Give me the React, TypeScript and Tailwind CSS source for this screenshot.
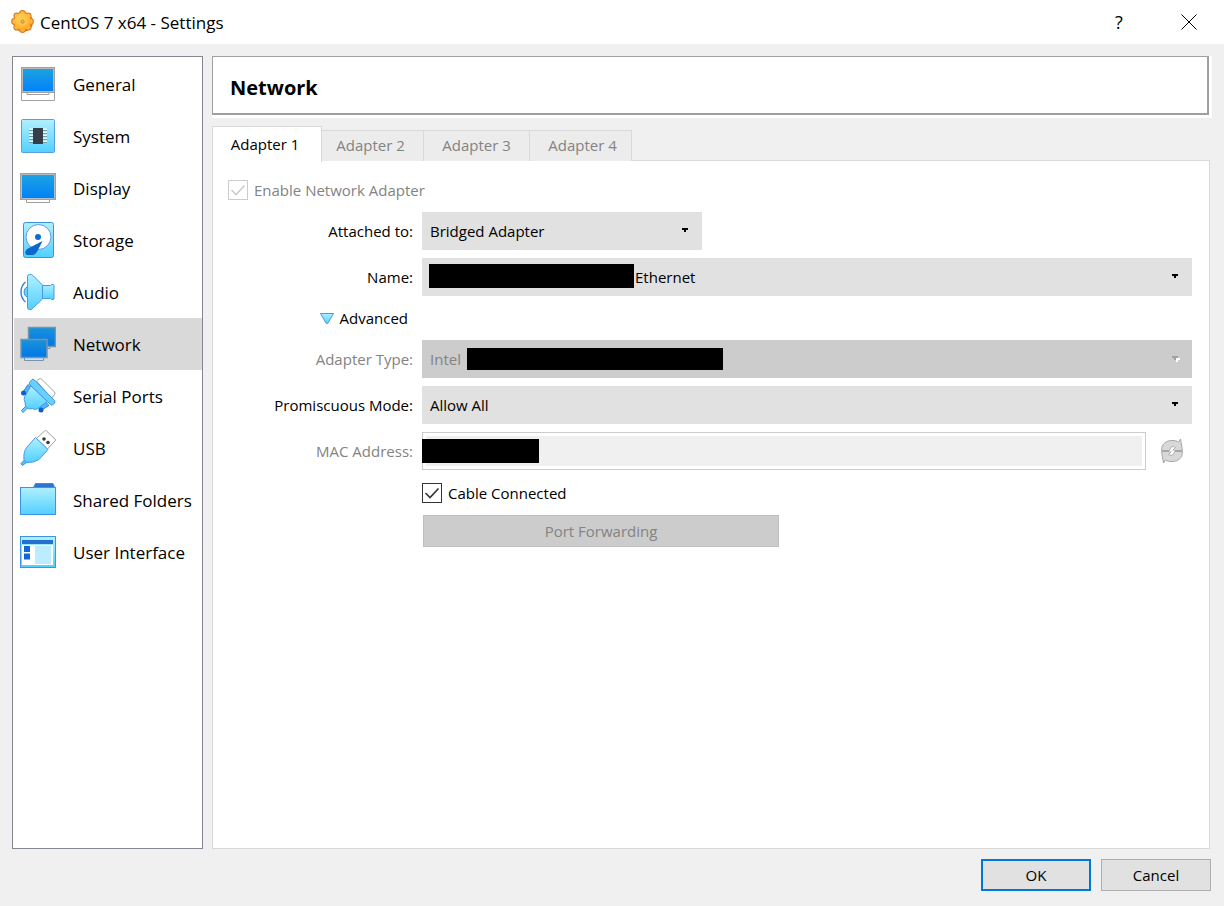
import { useState, type ReactNode, type SelectHTMLAttributes } from "react";
import { clsx } from "clsx";

function Gradients() {
    return (
        <svg className="absolute w-0 h-0" aria-hidden="true">
            <defs>
                <linearGradient id="screen" x1="0" y1="0" x2="0" y2="1">
                    <stop offset="0" stopColor="#1fa5e0" />
                    <stop offset="1" stopColor="#0080fb" />
                </linearGradient>
                <linearGradient id="sky" x1="0" y1="0" x2="0" y2="1">
                    <stop offset="0" stopColor="#b0f0ff" />
                    <stop offset="1" stopColor="#52d0ff" />
                </linearGradient>
                <linearGradient id="netScreen" x1="0" y1="0" x2="0" y2="1">
                    <stop offset="0" stopColor="#1a93dd" />
                    <stop offset="1" stopColor="#0077e6" />
                </linearGradient>
                <radialGradient id="gear" cx="0.4" cy="0.35" r="0.7">
                    <stop offset="0" stopColor="#ffdc58" />
                    <stop offset="1" stopColor="#ffa428" />
                </radialGradient>
            </defs>
        </svg>
    );
}

const icons: Record<string, ReactNode> = {
    General: (
        <>
            <path d="M1.5 26.5h33v8h-33z" fill="#fff" stroke="#a0a0a0" />
            <path d="M7 26.5v2h22v-2" fill="#fff" stroke="#a0a0a0" />
            <rect x="1.5" y="1.5" width="33" height="25" fill="url(#screen)" stroke="#a0a0a0" />
            <rect x="2.5" y="2.5" width="31" height="23" fill="none" stroke="#b8b8b8" />
        </>
    ),
    System: (
        <>
            <rect x="1.5" y="1.5" width="33" height="33" rx="1" fill="url(#sky)" stroke="#5a9fe0" />
            <path d="M9 11.5h18M9 14.5h18M9 17.5h18M9 20.5h18M9 23.5h18" stroke="#e8fbff" strokeWidth="2" />
            <path d="M9 12.5h18M9 15.5h18M9 18.5h18M9 21.5h18M9 24.5h18" stroke="#6a9cb0" />
            <rect x="13" y="10" width="10" height="16" fill="#353d48" />
        </>
    ),
    Display: (
        <>
            <path d="M6.5 29v3.5h23V29" fill="#fff" stroke="#a0a0a0" />
            <rect x="0.5" y="3.5" width="35" height="26" fill="url(#screen)" stroke="#a0a0a0" />
            <path d="M1.5 28.5v-24h33v24z" fill="none" stroke="#b4bcc4" />
        </>
    ),
    Storage: (
        <>
            <rect x="3.5" y="0.5" width="30" height="35" rx="2" fill="url(#sky)" stroke="#3c90e0" />
            <circle cx="18.5" cy="15" r="12.5" fill="#fff" stroke="#5a9ce0" />
            <circle cx="18" cy="15" r="3" fill="#0c6cd0" />
            <path d="M22.5 19 8 26.5c-3 1.5-4 6-0.5 6.5H13q3-1 4.5-4z" fill="#0c68d0" />
        </>
    ),
    Audio: (
        <>
            <path d="M5.5 8c-6 5-6 15 0 20" fill="none" stroke="#3484dc" strokeWidth="1.5" />
            <path d="M7.5 13c-4.500 1-4.500 9 0 10" fill="#68d4ff" stroke="#3484dc" />
            <path d="M7.5 2.5q0-2 2-2h2l2 1.5 9 9v14l-9 8.5-2 2h-2q-2 0-2-2z" fill="url(#sky)" stroke="#4898e4" />
            <path d="M22.5 11.5h8l1.500-1h1q1 0 1 1v13q0 1-1 1h-1l-1.500-1h-8z" fill="url(#sky)" stroke="#4898e4" />
        </>
    ),
    Network: (
        <>
            <path d="M14 20v2.5h16V20" fill="#d4e8fb" stroke="#7894ac" />
            <rect x="8.5" y="1.5" width="27" height="19" fill="url(#netScreen)" stroke="#7894ac" strokeWidth="1.5" />
            <path d="M4.5 31v3.5h19V31" fill="#c4e0fa" stroke="#7894ac" />
            <rect x="1" y="13.500" width="26" height="18" fill="url(#netScreen)" stroke="#7894ac" strokeWidth="1.5" />
        </>
    ),
    "Serial Ports": (
        <>
            <path d="m16.5 3 2.500-2q1.500-1 2.500 0L34.500 14q1 1 0 2.500l-3 4z" fill="#fff" stroke="#a0a0a0" />
            <path d="M3 14 8 6.5l3 3-5 7zM21 32.5l8-5-3.500-4-7 6z" fill="#54b4f8" stroke="#3488dc" />
            <path d="m6 28-4.500 4.500 1.500 2 5-5" fill="#68d4ff" stroke="#3488dc" />
            <path d="M11 7.5 4.500 19q-1 3 .5 5l.5 4 3 3 4-.5q2.500 2 5.500 0L28 23z" fill="url(#sky)" stroke="#4898e4" />
            <circle cx="3.500" cy="15" r="2.500" fill="#0c60cc" />
            <circle cx="21" cy="32" r="2.500" fill="#0c60cc" />
            <path d="m9.500 4.500 2.500-3q1-1 2.500.5l20 20.500q1 1 0 2.500l-2 2q-1 .5-2-.5L10 7q-1-1-.5-2.500z" fill="#68d0fc" stroke="#3c90e0" />
        </>
    ),
    USB: (
        <>
            <path d="M16.5 8.5 24.500 1q1-1 2 0l8.500 8q1 1 0 2l-7.500 8z" fill="#fff" stroke="#a0a0a0" />
            <circle cx="24" cy="9" r="1.800" fill="#383838" />
            <circle cx="28" cy="12.500" r="1.800" fill="#383838" />
            <path d="m5 29.500-4 4 1.500 2 5-4" fill="#54c0fc" stroke="#3488dc" />
            <path d="M15.500 7.5 7 17q-4 5-3 13l2 2.500q8 .5 13-3L28 19.500z" fill="url(#sky)" stroke="#4898e4" />
        </>
    ),
    "Shared Folders": (
        <>
            <path d="M13 6.500 15.500 1.500h17.500l2 5z" fill="#2c74d4" stroke="#4488dc" />
            <rect x="0.5" y="5.5" width="35" height="27" fill="url(#sky)" stroke="#3c94e4" />
        </>
    ),
    "User Interface": (
        <>
            <rect x="0.5" y="2.5" width="35" height="31" fill="url(#sky)" stroke="#3c94e4" />
            <path d="M2 6h31v4H2z" fill="#2470d0" />
            <path d="M2 11h31v20H2z" fill="#fff" />
            <path d="M4 12h6v6H4zM4 19.500h6v6H4z" fill="#1068d8" />
            <path d="M15 12h16v18H15z" fill="#bcecff" />
        </>
    ),
};

const sections = Object.keys(icons);
const adapters = ["Adapter 1", "Adapter 2", "Adapter 3", "Adapter 4"];

// centres of the eight gear teeth
const teeth = [
    [12.5, 3.5],
    [18.2, 5.8],
    [20.5, 11.5],
    [18.2, 17.2],
    [12.5, 19.5],
    [6.8, 17.2],
    [4.5, 11.5],
    [6.8, 5.8],
];

function GearIcon() {
    return (
        <svg viewBox="0 0 25 24" className="w-[25px] h-6" aria-hidden="true">
            <g fill="#d87820">
                <circle cx="13" cy="12" r="10" />
                {teeth.map(([x, y]) => (
                    <circle key={`${x}-${y}`} cx={x} cy={y} r="3.4" />
                ))}
            </g>
            <g fill="#ffb43c">
                {teeth.map(([x, y]) => (
                    <circle key={`${x}-${y}`} cx={x} cy={y} r="2.4" />
                ))}
            </g>
            <circle cx="12.5" cy="11.5" r="8.5" fill="url(#gear)" />
            <circle cx="12.5" cy="11.5" r="4" fill="none" stroke="#ffc450" strokeWidth="1.5" />
            <circle cx="12.5" cy="11.5" r="1.6" fill="#f0c080" stroke="#d87820" />
        </svg>
    );
}

function RefreshIcon() {
    return (
        <svg viewBox="0 0 24 26" className="w-6 h-[26px]" fill="#d8d8d8" stroke="#a8a8a8" aria-hidden="true">
            <path d="M1.5 12.5C1.500 6 6 2.500 12 2.500c3 0 5 .5 6.500 1.500L20.500 1l2 11.500H12.500l3-3c-3-2-5.500 0-6 3z" />
            <path d="M22.500 13.500C22.500 20 18 23.500 12 23.500c-3 0-5-.5-6.500-1.500L3.500 25l-2-11.500h10l-3 3c3 2 5.500 0 6-3z" />
            <path d="m13 9-4 4.500h3L11 17l4-4.500h-3z" fill="#fff" stroke="none" />
        </svg>
    );
}

interface DropDownProps extends SelectHTMLAttributes<HTMLSelectElement> {
    value: string;
    options: string[];
    children?: ReactNode;
}

function DropDown({ value, options, className, disabled, children, ...rest }: DropDownProps) {
    return (
        <div className="relative w-full">
            <select
                {...rest}
                defaultValue={value}
                disabled={disabled}
                className={clsx(
                    "block w-full h-[38px] appearance-none pr-8 opacity-100 outline-none",
                    disabled ? "bg-[#cccccc] text-[#838383]" : "bg-[#e1e1e1] text-black",
                    className ?? "pl-2"
                )}
            >
                {options.map((option) => (
                    <option key={option}>{option}</option>
                ))}
            </select>
            {children}
            <svg
                viewBox="0 0 8 6"
                className="absolute right-3 top-4 w-2 h-1.5 pointer-events-none"
                shapeRendering="crispEdges"
                aria-hidden="true"
            >
                {disabled && <path d="M4 2h4v2H6v2H4z" fill="#fff" />}
                <path d="M0 0h6v2H4v2H2V2H0z" fill={disabled ? "#a0a0a0" : "#000"} />
            </svg>
        </div>
    );
}

interface CheckProps {
    label: string;
    disabled?: boolean;
}

function Check({ label, disabled }: CheckProps) {
    return (
        <label className={clsx("inline-flex items-center gap-1.5", disabled && "text-[#838383]")}>
            <span className="grid w-5 h-5">
                <input
                    type="checkbox"
                    defaultChecked
                    disabled={disabled}
                    className={clsx(
                        "peer col-start-1 row-start-1 w-5 h-5 appearance-none border bg-white",
                        disabled ? "border-[#cccccc]" : "border-[#333333]"
                    )}
                />
                <svg
                    viewBox="0 0 20 20"
                    className="col-start-1 row-start-1 hidden peer-checked:block pointer-events-none"
                    fill="none"
                    stroke={disabled ? "#cccccc" : "#333333"}
                    strokeWidth="1.6"
                    aria-hidden="true"
                >
                    <path d="m3.5 10 4.5 4.5 8.500-9" />
                </svg>
            </span>
            {label}
        </label>
    );
}

const labelClass = "text-right whitespace-nowrap";

export default function App() {
    const [section, setSection] = useState("Network");
    const [adapter, setAdapter] = useState("Adapter 1");

    return (
        <div className="min-h-screen flex flex-col bg-[#f0f0f0] text-black text-[15px] leading-5 font-['Open_Sans','Noto_Sans',sans-serif]">
            <Gradients />

            <header className="h-11 bg-white flex items-center pl-[10px]">
                <GearIcon />
                <h1 className="ml-[5px] flex-1 pt-px text-[17px]">CentOS 7 x64 - Settings</h1>
                <button aria-label="Help" className="w-[70px] h-11 text-lg">?</button>
                <button aria-label="Close" className="w-[70px] h-11 flex items-center justify-center">
                    <svg viewBox="0 0 16 16" className="w-4 h-4" stroke="#000" aria-hidden="true">
                        <path d="m0.5 0.5 15 15M15.5 0.5l-15 15" />
                    </svg>
                </button>
            </header>

            <div className="flex-1 flex gap-[9px] pl-3 pr-3.5 pt-3">
                <nav className="w-[191px] shrink-0 bg-white border border-[#828790] py-px pl-px">
                    {sections.map((name) => (
                        <button
                            key={name}
                            onClick={() => setSection(name)}
                            aria-current={section === name ? "page" : undefined}
                            className={clsx(
                                "w-full h-[52px] flex items-center gap-[17px] pl-1.5 text-[17px] whitespace-nowrap",
                                section === name && "bg-[#d9d9d9]"
                            )}
                        >
                            <svg viewBox="0 0 36 36" className="w-9 h-9 shrink-0" aria-hidden="true">
                                {icons[name]}
                            </svg>
                            <span className="pt-0.5">{name}</span>
                        </button>
                    ))}
                </nav>

                <main className="flex-1 min-w-0 flex flex-col">
                    <div className="bg-white pr-[3px] pb-[3px] -mr-0.5">
                        <div className="h-[59px] flex items-center pl-[17px] pt-1.5 border border-r-2 border-b-2 border-[#a0a0a0]">
                            <h2 className="text-xl font-bold">{section}</h2>
                        </div>
                    </div>

                    <div role="tablist" className="mt-2 flex items-end h-9 relative">
                        {adapters.map((name) => (
                            <button
                                key={name}
                                role="tab"
                                aria-selected={adapter === name}
                                onClick={() => setAdapter(name)}
                                className={clsx(
                                    "border-[#d9d9d9] pb-0.5",
                                    adapter === name
                                        ? "h-9 w-[110px] pr-1 bg-white border border-b-0"
                                        : "h-[31px] mb-px w-[106px] first:border-l border-t border-r bg-[#ececec] text-[#838383] [&:nth-child(2)]:w-[102px] [&:nth-child(2)]:pr-1 last:w-[102px] last:pl-1"
                                )}
                            >
                                {name}
                            </button>
                        ))}
                    </div>

                    <section className="flex-1 -mt-0.5 bg-white border border-[#d9d9d9] pl-[15px] pr-[17px] pt-[15px]">
                        <div className="h-7 flex items-center">
                            <Check label="Enable Network Adapter" disabled />
                        </div>

                        <div className="mt-2 grid grid-cols-[185px_minmax(0,1fr)] gap-x-[9px] gap-y-2 items-center">
                            <label htmlFor="attached" className={labelClass}>Attached to:</label>
                            <div className="w-[280px]">
                                <DropDown id="attached" value="Bridged Adapter" options={["Not attached", "NAT", "Bridged Adapter"]} />
                            </div>

                            <label htmlFor="name" className={labelClass}>Name:</label>
                            <DropDown id="name" value="Ethernet" options={["Ethernet"]} className="pl-[213px]">
                                <span className="absolute left-[7px] top-1.5 w-[205px] h-6 bg-black pointer-events-none" />
                            </DropDown>

                            <button className="h-7 justify-self-end mr-[5px] flex items-center gap-1.5 whitespace-nowrap">
                                <svg viewBox="0 0 14 12" className="w-3.5 h-3" aria-hidden="true">
                                    <path d="M0.5 1.5h13L8 11q-1 1-2 0z" fill="url(#sky)" stroke="#4898e4" />
                                </svg>
                                Advanced
                            </button>
                            <span />

                            <label htmlFor="type" className={clsx(labelClass, "text-[#838383]")}>Adapter Type:</label>
                            <DropDown id="type" value="Intel" options={["Intel"]} disabled>
                                <span className="absolute left-[45px] top-2 w-64 h-[22px] bg-black pointer-events-none" />
                            </DropDown>

                            <label htmlFor="mode" className={labelClass}>Promiscuous Mode:</label>
                            <DropDown id="mode" value="Allow All" options={["Deny", "Allow VMs", "Allow All"]} />

                            <label htmlFor="mac" className={clsx(labelClass, "text-[#838383]")}>MAC Address:</label>
                            <div className="flex items-center">
                                <div className="relative flex-1 h-[38px] border border-[#cccccc] bg-white p-[3px]">
                                    <input id="mac" type="text" disabled className="block w-full h-full bg-[#f0f0f0]" />
                                    <span className="absolute -left-px top-1.5 w-[117px] h-6 bg-black pointer-events-none" />
                                </div>
                                <button aria-label="Generate new MAC address" disabled className="w-[46px] pl-1.5 flex justify-center">
                                    <RefreshIcon />
                                </button>
                            </div>

                            <div className="col-start-2 h-[29px] flex items-center">
                                <Check label="Cable Connected" />
                            </div>

                            <button
                                disabled
                                className="col-start-2 ml-px w-[356px] h-8 bg-[#cccccc] border border-[#bfbfbf] text-[#838383]"
                            >
                                Port Forwarding
                            </button>
                        </div>
                    </section>
                </main>
            </div>

            <footer className="flex justify-end gap-[10px] pt-[10px] pb-[15px] pr-[13px]">
                <button className="w-[110px] h-8 bg-[#e1e1e1] border-2 border-[#0078d7]">OK</button>
                <button className="w-[110px] h-8 bg-[#e1e1e1] border border-[#adadad]">Cancel</button>
            </footer>
        </div>
    );
}
